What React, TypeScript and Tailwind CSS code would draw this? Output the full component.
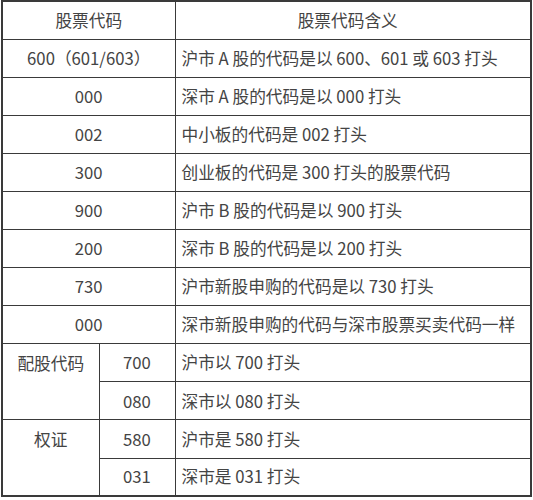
const rows: { code: string; meaning: string }[] = [
  { code: "600（601/603）", meaning: "沪市 A 股的代码是以 600、601 或 603 打头" },
  { code: "000", meaning: "深市 A 股的代码是以 000 打头" },
  { code: "002", meaning: "中小板的代码是 002 打头" },
  { code: "300", meaning: "创业板的代码是 300 打头的股票代码" },
  { code: "900", meaning: "沪市 B 股的代码是以 900 打头" },
  { code: "200", meaning: "深市 B 股的代码是以 200 打头" },
  { code: "730", meaning: "沪市新股申购的代码是以 730 打头" },
  { code: "000", meaning: "深市新股申购的代码与深市股票买卖代码一样" },
];

// grouped rows at the bottom: label spans two sub-codes
const groups = [
  {
    label: "配股代码",
    items: [
      { code: "700", meaning: "沪市以 700 打头" },
      { code: "080", meaning: "深市以 080 打头" },
    ],
  },
  {
    label: "权证",
    items: [
      { code: "580", meaning: "沪市是 580 打头" },
      { code: "031", meaning: "深市是 031 打头" },
    ],
  },
];

const cell = "border border-[#3a3a3a] p-0";

export default function App() {
  return (
    <div
      className="w-[533px] h-[500px] bg-white text-[#444] text-[16.7px] leading-none"
      style={{ fontFamily: '"Noto Sans CJK SC", "Noto Sans", sans-serif' }}
    >
      <table className="ml-[1px] w-[531px] border-collapse border-2 border-[#3a3a3a] table-fixed">
        <colgroup>
          <col className="w-[97px]" />
          <col className="w-[76px]" />
          <col />
        </colgroup>
        <thead>
          <tr className="h-[38px]">
            <th colSpan={2} className={`${cell} font-normal text-center`}>
              股票代码
            </th>
            <th className={`${cell} font-normal text-center pr-[10px]`}>股票代码含义</th>
          </tr>
        </thead>
        <tbody>
          {rows.map((r, i) => (
            <tr key={i} className="h-[38.1px]">
              <td colSpan={2} className={`${cell} text-center`}>
                {r.code}
              </td>
              <td className={`${cell} pl-[6px]`}>{r.meaning}</td>
            </tr>
          ))}
          {groups.map((g) =>
            g.items.map((it, j) => (
              <tr key={g.label + j} className="h-[38.1px]">
                {j === 0 && (
                  <td rowSpan={2} className={`${cell} text-center align-top pt-[11px]`}>
                    {g.label}
                  </td>
                )}
                <td className={`${cell} text-center`}>{it.code}</td>
                <td className={`${cell} pl-[6px]`}>{it.meaning}</td>
              </tr>
            ))
          )}
        </tbody>
      </table>
    </div>
  );
}
